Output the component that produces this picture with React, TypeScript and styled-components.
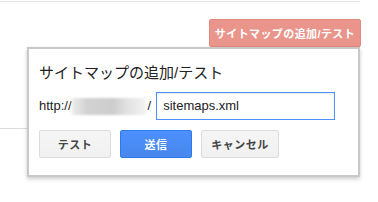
import styled, { createGlobalStyle } from "styled-components";

const GlobalStyle = createGlobalStyle`
  html, body {
    margin: 0;
    padding: 0;
    background: #fff;
    font-family: Arial, "Liberation Sans", "Noto Sans CJK JP", sans-serif;
  }
`;

const Page = styled.div`
  position: relative;
  width: 378px;
  height: 202px;
  overflow: hidden;
  background: #fff;
`;

const TopRule = styled.div`
  margin-top: 1px;
  width: 360px;
  height: 1px;
  background: #e6e6e6;
`;

const Toolbar = styled.div`
  display: flex;
  justify-content: flex-end;
  width: 361px;
  padding-top: 17px;
`;

const RedButton = styled.button`
  width: 152px;
  height: 28px;
  border: 1px solid #e4887e;
  border-radius: 2px;
  background: #ea958b;
  color: #fff;
  font-family: Arial, "Liberation Sans", "Noto Sans CJK JP", sans-serif;
  font-size: 11px;
  font-weight: bold;
  letter-spacing: 0.4px;
  padding: 0;
`;

const TableRow = styled.div`
  margin-top: 81px;
  width: 40px;
  height: 1px;
  background: #dcdcdc;
`;

const Dialog = styled.div`
  position: absolute;
  left: 27px;
  top: 47px;
  width: 333px;
  height: 130px;
  box-sizing: border-box;
  background: #fff;
  border: 2px solid #c8c8c8;
  box-shadow: 0 2px 4px rgba(0, 0, 0, 0.2);
  padding: 14px 0 0 10px;
`;

const Title = styled.div`
  font-size: 15px;
  color: #222;
  line-height: 20px;
`;

const UrlRow = styled.div`
  display: flex;
  align-items: center;
  height: 28px;
  margin-top: 9px;
  font-size: 13px;
  line-height: 16px;
  color: #222;
`;

const Blurred = styled.span`
  display: inline-block;
  width: 74px;
  height: 17px;
  margin: 0 2px 0 0;
  background: linear-gradient(
    90deg,
    #ececec 0%,
    #d2d2d2 20%,
    #cdcdcd 55%,
    #e2e2e2 75%,
    #f3f3f3 100%
  );
  filter: blur(1px);
`;

const UrlInput = styled.div`
  margin-left: 5px;
  width: 179px;
  height: 28px;
  box-sizing: border-box;
  border: 1px solid #4d90fe;
  box-shadow: inset 0 1px 2px rgba(0, 0, 0, 0.1);
  padding-left: 6px;
  display: flex;
  align-items: center;
  font-size: 13px;
  color: #222;
`;

const Buttons = styled.div`
  display: flex;
  gap: 9px;
  margin-top: 10px;
`;

const Button = styled.button<{ $primary?: boolean; $w: number }>`
  width: ${(p) => p.$w}px;
  height: 28px;
  border-radius: 2px;
  padding: 0;
  font-family: Arial, "Liberation Sans", "Noto Sans CJK JP", sans-serif;
  font-size: 11px;
  font-weight: bold;
  letter-spacing: 0.5px;
  border: 1px solid ${(p) => (p.$primary ? "#3079ed" : "#dcdcdc")};
  background: ${(p) =>
    p.$primary ? "linear-gradient(#4d90fe, #4787ed)" : "linear-gradient(#f5f5f5, #f1f1f1)"};
  color: ${(p) => (p.$primary ? "#fff" : "#444")};
`;

export default function App() {
  return (
    <Page>
      <GlobalStyle />
      <TopRule />
      <Toolbar>
        <RedButton>サイトマップの追加/テスト</RedButton>
      </Toolbar>
      <TableRow />
      <Dialog>
        <Title>サイトマップの追加/テスト</Title>
        <UrlRow>
          http://<Blurred />/
          <UrlInput>sitemaps.xml</UrlInput>
        </UrlRow>
        <Buttons>
          <Button $w={72}>テスト</Button>
          <Button $w={72} $primary>
            送信
          </Button>
          <Button $w={78}>キャンセル</Button>
        </Buttons>
      </Dialog>
    </Page>
  );
}
